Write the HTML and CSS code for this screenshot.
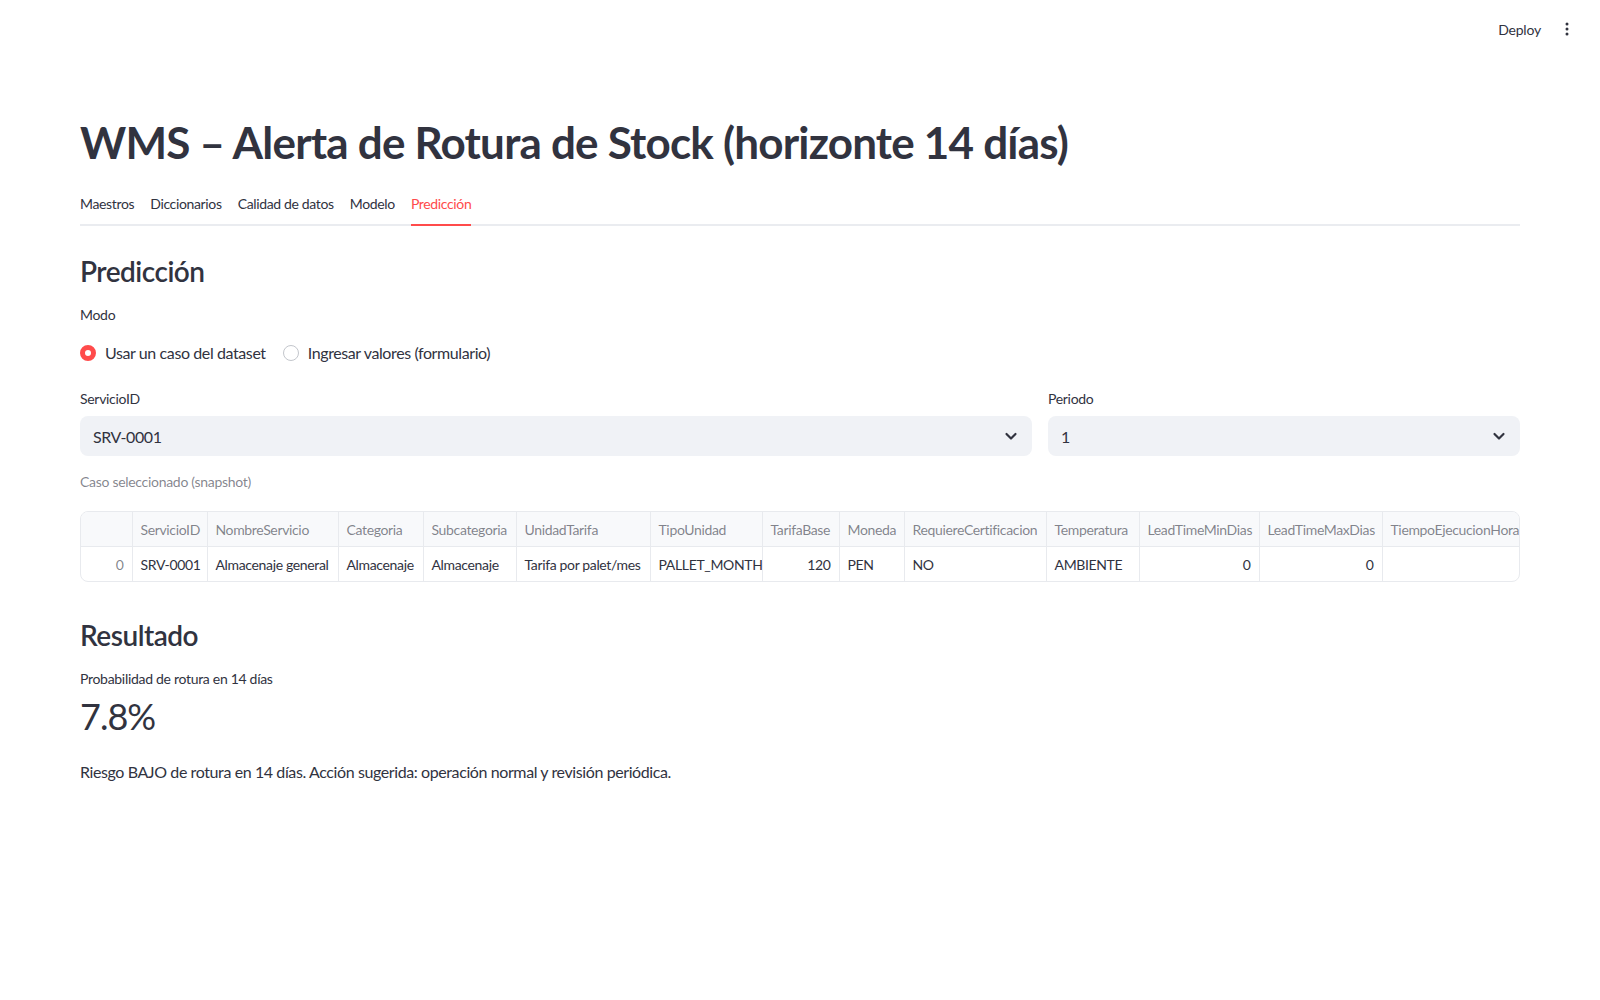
FILE: index.html
```html
<!DOCTYPE html>
<html lang="es">
<head>
    <meta charset="UTF-8">
    <meta name="viewport" content="width=device-width, initial-scale=1.0">
    <title>WMS – Alerta de Rotura de Stock</title>
    <link rel="stylesheet" href="styles.css">
</head>
<body>
    <header class="topbar">
        <button class="deploy">Deploy</button>
        <span class="menu">
            <svg width="16" height="16" viewBox="0 0 16 16"><circle cx="8" cy="3" r="1.5"/><circle cx="8" cy="8" r="1.5"/><circle cx="8" cy="13" r="1.5"/></svg>
        </span>
    </header>

    <main class="container">
        <h1 class="titulo">WMS – Alerta de Rotura de Stock (horizonte 14 días)</h1>

        <nav class="tabs">
            <span class="tab">Maestros</span>
            <span class="tab">Diccionarios</span>
            <span class="tab">Calidad de datos</span>
            <span class="tab">Modelo</span>
            <span class="tab activo">Predicción</span>
        </nav>

        <h3 class="subtitulo">Predicción</h3>

        <div class="etiqueta modo">Modo</div>
        <div class="radios">
            <label class="radio"><span class="punto marcado"></span>Usar un caso del dataset</label>
            <label class="radio"><span class="punto"></span>Ingresar valores (formulario)</label>
        </div>

        <div class="columnas">
            <div class="col-grande">
                <div class="etiqueta">ServicioID</div>
                <div class="select">
                    <span>SRV-0001</span>
                    <svg width="14" height="14" viewBox="0 0 14 14"><path d="M2.5 5 L7 9.5 L11.5 5" fill="none" stroke="#31333f" stroke-width="2.2" stroke-linecap="round" stroke-linejoin="round"/></svg>
                </div>
            </div>
            <div class="col-chica">
                <div class="etiqueta">Periodo</div>
                <div class="select">
                    <span>1</span>
                    <svg width="14" height="14" viewBox="0 0 14 14"><path d="M2.5 5 L7 9.5 L11.5 5" fill="none" stroke="#31333f" stroke-width="2.2" stroke-linecap="round" stroke-linejoin="round"/></svg>
                </div>
            </div>
        </div>

        <div class="caption">Caso seleccionado (snapshot)</div>

        <div class="tabla-wrap">
            <table class="tabla">
                <colgroup>
                    <col style="width:51px">
                    <col style="width:75px">
                    <col style="width:131px">
                    <col style="width:85px">
                    <col style="width:93px">
                    <col style="width:134px">
                    <col style="width:112px">
                    <col style="width:77px">
                    <col style="width:65px">
                    <col style="width:142px">
                    <col style="width:93px">
                    <col style="width:120px">
                    <col style="width:123px">
                    <col style="width:160px">
                </colgroup>
                <thead>
                    <tr>
                        <th></th>
                        <th>ServicioID</th>
                        <th>NombreServicio</th>
                        <th>Categoria</th>
                        <th>Subcategoria</th>
                        <th>UnidadTarifa</th>
                        <th>TipoUnidad</th>
                        <th>TarifaBase</th>
                        <th>Moneda</th>
                        <th>RequiereCertificacion</th>
                        <th>Temperatura</th>
                        <th>LeadTimeMinDias</th>
                        <th>LeadTimeMaxDias</th>
                        <th>TiempoEjecucionHoras</th>
                    </tr>
                </thead>
                <tbody>
                    <tr>
                        <td class="num indice">0</td>
                        <td>SRV-0001</td>
                        <td>Almacenaje general</td>
                        <td>Almacenaje</td>
                        <td>Almacenaje</td>
                        <td>Tarifa por palet/mes</td>
                        <td>PALLET_MONTH</td>
                        <td class="num">120</td>
                        <td>PEN</td>
                        <td>NO</td>
                        <td>AMBIENTE</td>
                        <td class="num">0</td>
                        <td class="num">0</td>
                        <td></td>
                    </tr>
                </tbody>
            </table>
        </div>

        <h3 class="subtitulo resultado">Resultado</h3>
        <div class="etiqueta metrica-label">Probabilidad de rotura en 14 días</div>
        <div class="metrica">7.8%</div>

        <p class="mensaje">Riesgo BAJO de rotura en 14 días. Acción sugerida: operación normal y revisión periódica.</p>
    </main>
</body>
</html>
```

FILE: styles.css
```css
/* Estilo Geral */
body {
    font-family: Lato, "Noto Sans", sans-serif;
    margin: 0;
    padding: 0;
    color: #31333f;
    background-color: #fff;
    letter-spacing: -0.4px;
}

/* Barra superior */
.topbar {
    height: 58px;
    display: flex;
    justify-content: flex-end;
    align-items: center;
    gap: 10px;
    padding-right: 25px;
}

.deploy {
    font-family: inherit;
    font-size: 14px;
    letter-spacing: -0.2px;
    color: #31333f;
    background: none;
    border: none;
    padding: 4px 8px;
}

.menu svg {
    display: block;
    fill: #31333f;
}

.container {
    padding: 58px 80px 80px;
}

/* Título */
.titulo {
    font-size: 44px;
    line-height: 53px;
    font-weight: 700;
    margin: 0;
    letter-spacing: -0.8px;
}

/* Tabs */
.tabs {
    display: flex;
    gap: 16px;
    margin-top: 15px;
    border-bottom: 2px solid #eaecf0;
}

.tab {
    font-size: 14px;
    letter-spacing: -0.35px;
    line-height: 40px;
    height: 40px;
    margin-bottom: -2px;
    border-bottom: 2px solid transparent;
}

.tab.activo {
    color: #ff4b4b;
    border-bottom-color: #ff4b4b;
}

.subtitulo {
    font-size: 28px;
    line-height: 34px;
    font-weight: 600;
    letter-spacing: -0.5px;
    margin: 28px 0 0;
}

.etiqueta {
    font-size: 14px;
    line-height: 20px;
    letter-spacing: -0.3px;
}

.modo {
    margin-top: 17px;
}

/* Radios */
.radios {
    display: flex;
    gap: 17px;
    margin-top: 16px;
}

.radio {
    display: flex;
    align-items: center;
    gap: 9px;
    font-size: 16px;
    line-height: 24px;
}

.punto {
    width: 16px;
    height: 16px;
    border-radius: 50%;
    border: 1px solid #c3c6cc;
    box-sizing: border-box;
}

.punto.marcado {
    border: 5px solid #ff4b4b;
    background: #fff;
}

/* Selects */
.columnas {
    display: grid;
    grid-template-columns: 952px 1fr;
    gap: 16px;
    margin-top: 24px;
}

.select {
    margin-top: 7px;
    height: 40px;
    background-color: #f0f2f6;
    border-radius: 8px;
    display: flex;
    align-items: center;
    justify-content: space-between;
    padding: 0 14px 0 13px;
    font-size: 16px;
}

.select svg {
    display: block;
}

.caption {
    font-size: 14px;
    line-height: 20px;
    letter-spacing: -0.3px;
    color: rgba(49, 51, 63, 0.6);
    margin-top: 16px;
}

/* Tabla */
.tabla-wrap {
    margin-top: 19px;
    border: 1px solid #e8eaee;
    border-radius: 8px;
    overflow: hidden;
}

.tabla {
    table-layout: fixed;
    border-collapse: collapse;
    width: 1461px;
    font-size: 14px;
    letter-spacing: -0.35px;
}

.tabla th,
.tabla td {
    height: 34px;
    padding: 0 8px;
    text-align: left;
    white-space: nowrap;
    overflow: hidden;
    border-right: 1px solid #e8eaee;
}

.tabla th {
    background-color: #f8f9fb;
    font-weight: 400;
    color: rgba(49, 51, 63, 0.6);
    border-bottom: 1px solid #e8eaee;
}

.tabla td.num {
    text-align: right;
}

.tabla td.indice {
    color: rgba(49, 51, 63, 0.6);
}

/* Resultado */
.resultado {
    margin-top: 36px;
}

.metrica-label {
    margin-top: 17px;
}

.metrica {
    font-size: 36px;
    line-height: 44px;
    letter-spacing: -1px;
    margin-top: 5px;
}

.mensaje {
    font-size: 16px;
    line-height: 24px;
    margin: 22px 0 0;
}
```
